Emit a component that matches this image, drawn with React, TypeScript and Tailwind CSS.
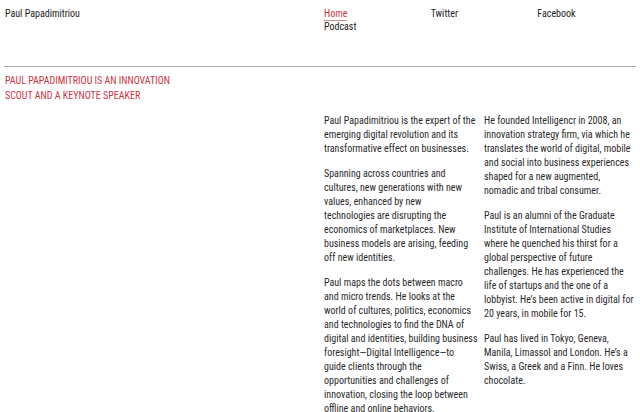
import React from "react";

const col1: string[][] = [
  [
    "Paul Papadimitriou is the expert of the",
    "emerging digital revolution and its",
    "transformative effect on businesses.",
  ],
  [
    "Spanning across countries and",
    "cultures, new generations with new",
    "values, enhanced by new",
    "technologies are disrupting the",
    "economics of marketplaces. New",
    "business models are arising, feeding",
    "off new identities.",
  ],
  [
    "Paul maps the dots between macro",
    "and micro trends. He looks at the",
    "world of cultures, politics, economics",
    "and technologies to find the DNA of",
    "digital and identities, building business",
    "foresight—Digital Intelligence—to",
    "guide clients through the",
    "opportunities and challenges of",
    "innovation, closing the loop between",
    "offline and online behaviors.",
  ],
];
const col2: string[][] = [
  [
    "He founded Intelligencr in 2008, an",
    "innovation strategy firm, via which he",
    "translates the world of digital, mobile",
    "and social into business experiences",
    "shaped for a new augmented,",
    "nomadic and tribal consumer.",
  ],
  [
    "Paul is an alumni of the Graduate",
    "Institute of International Studies",
    "where he quenched his thirst for a",
    "global perspective of future",
    "challenges. He has experienced the",
    "life of startups and the one of a",
    "lobbyist. He’s been active in digital for",
    "20 years, in mobile for 15.",
  ],
  [
    "Paul has lived in Tokyo, Geneva,",
    "Manila, Limassol and London. He’s a",
    "Swiss, a Greek and a Finn. He loves",
    "chocolate.",
  ],
];

function Column({ paras, className }: { paras: string[][]; className: string }) {
  return (
    <div className={className + " pl-[4px] flex flex-col gap-[11px] text-[#2a2a2a] leading-[14px]"}>
      {paras.map((lines, i) => (
        <p key={i}>
          {lines.map((l, j) => (
            <span key={j} className="block whitespace-nowrap">
              {l}
            </span>
          ))}
        </p>
      ))}
    </div>
  );
}

export default function App() {
  return (
    <div className="w-[640px] h-[412px] overflow-hidden bg-white text-[#222] text-[10px] font-['Roboto_Condensed','Roboto',sans-serif]">
      <header className="grid grid-cols-2 pt-[8px] leading-[12px]">
        <div className="pl-[5px]">Paul Papadimitriou</div>
        <nav className="grid grid-cols-3">
          <div className="pl-[4px] flex flex-col items-start">
            <a className="text-[#c9353f] border-b border-[#c98a8f]">Home</a>
            <a>Podcast</a>
          </div>
          <div className="pl-[4px]">
            <a>Twitter</a>
          </div>
          <div className="pl-[4px]">
            <a>Facebook</a>
          </div>
        </nav>
      </header>
      <div className="mx-[4px] mt-[33px] border-t border-[#aaa]" />
      <h1 className="pl-[5px] pt-[6px] w-[190px] text-[#c9353f] uppercase leading-[15px] font-normal">
        Paul Papadimitriou is an innovation scout and a keynote speaker
      </h1>
      <section className="grid grid-cols-4 pt-[11px]">
        <Column paras={col1} className="col-start-3" />
        <Column paras={col2} className="col-start-4" />
      </section>
    </div>
  );
}
